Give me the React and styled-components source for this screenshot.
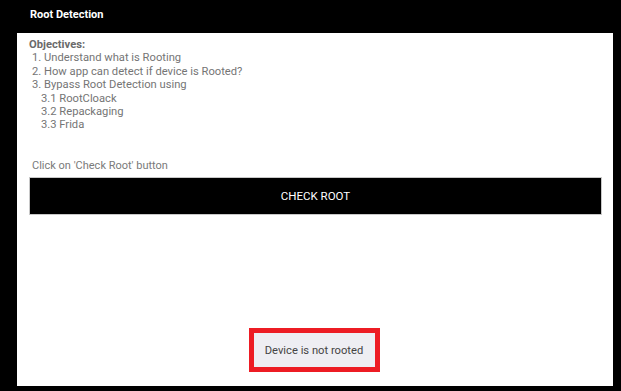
import styled, { createGlobalStyle } from "styled-components";

const GlobalStyle = createGlobalStyle`
    html, body {
        margin: 0;
        padding: 0;
        background: #000;
    }
    body {
        font-family: Roboto, "Liberation Sans", sans-serif;
    }
`;

const objectives = [
    { text: "1. Understand what is Rooting", level: 1 },
    { text: "2. How app can detect if device is Rooted?", level: 1 },
    { text: "3. Bypass Root Detection using", level: 1 },
    { text: "3.1 RootCloack", level: 2 },
    { text: "3.2 Repackaging", level: 2 },
    { text: "3.3 Frida", level: 2 },
];

function App() {
    return (
        <>
            <GlobalStyle />
            <Screen>
                <Header>Root Detection</Header>
                <Panel>
                    <Objectives>
                        <Heading>Objectives:</Heading>
                        {objectives.map((item) => (
                            <Line key={item.text} level={item.level}>
                                {item.text}
                            </Line>
                        ))}
                    </Objectives>
                    <Hint>Click on 'Check Root' button</Hint>
                    <CheckButton>CHECK ROOT</CheckButton>
                    <ToastArea>
                        <Toast>Device is not rooted</Toast>
                    </ToastArea>
                </Panel>
            </Screen>
        </>
    );
}

export default App;

const Screen = styled.div`
    width: 621px;
    height: 391px;
    background: #000;
    display: flex;
    flex-direction: column;
    overflow: hidden;
`;

const Header = styled.div`
    height: 33px;
    display: flex;
    align-items: center;
    padding-left: 30px;
    padding-bottom: 5px;
    box-sizing: border-box;
    color: #fff;
    font-weight: bold;
    font-size: 11px;
`;

const Panel = styled.div`
    width: 596px;
    height: 353px;
    margin-left: 17px;
    background: #fff;
    display: flex;
    flex-direction: column;
    padding: 5px 11px 14px 12px;
    box-sizing: border-box;
`;

const Objectives = styled.div`
    display: flex;
    flex-direction: column;
    color: #757575;
    font-size: 11.2px;
    line-height: 13.4px;
`;

const Heading = styled.div`
    font-weight: bold;
    color: #6a6a6a;
`;

const Line = styled.div`
    padding-left: ${(props) => (props.level === 2 ? 12 : 3)}px;
`;

const Hint = styled.div`
    margin-top: 27px;
    padding-left: 3px;
    color: #7a7a7a;
    font-size: 11px;
    line-height: 13px;
`;

const CheckButton = styled.button`
    margin-top: 5px;
    height: 38px;
    width: 100%;
    background: #000;
    color: #fff;
    border: 1px solid #c8c8c8;
    font-family: Roboto, "Liberation Sans", sans-serif;
    font-size: 11.5px;
    font-weight: 400;
    padding: 0;
    cursor: pointer;
`;

const ToastArea = styled.div`
    flex: 1;
    display: flex;
    align-items: flex-end;
    justify-content: center;
    padding-right: 3px;
`;

const Toast = styled.div`
    width: 121px;
    height: 34px;
    border: 5px solid #ed1c24;
    background: #eeeef3;
    color: #444;
    font-size: 11.2px;
    display: flex;
    align-items: center;
    justify-content: center;
`;
